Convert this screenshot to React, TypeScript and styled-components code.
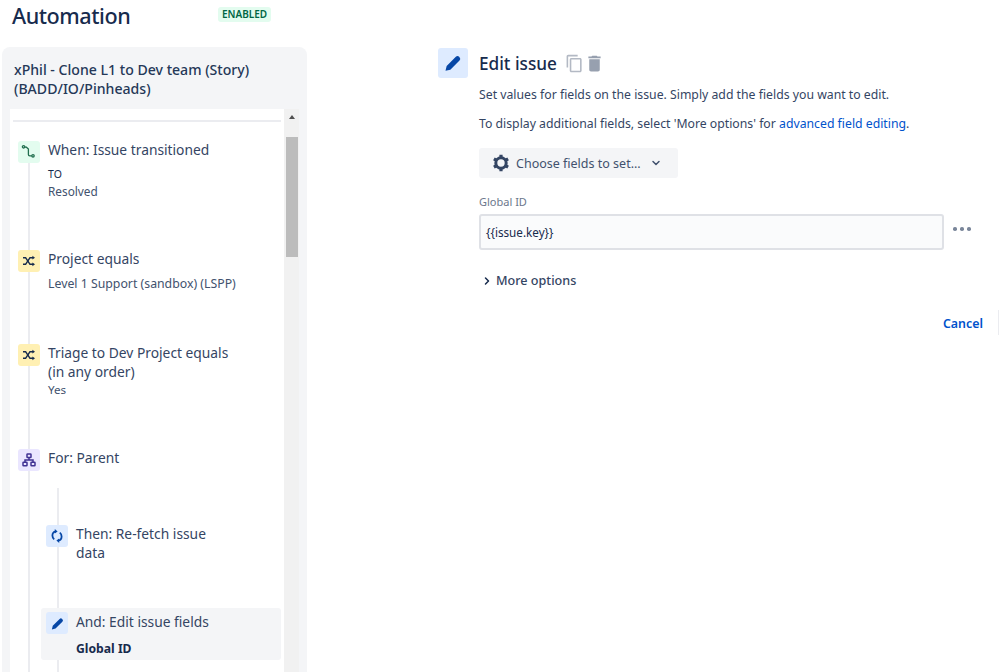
import React from 'react';
import styled, { createGlobalStyle } from 'styled-components';
import { MdContentCopy, MdDelete } from 'react-icons/md';
import { ChevronDown, ChevronRight } from 'lucide-react';

const Global = createGlobalStyle`
  html, body { margin: 0; padding: 0; background: #fff; }
  body { width: 999px; height: 672px; overflow: hidden; font-family: "Noto Sans", "Open Sans", sans-serif; color: #172b4d; }
  * { box-sizing: border-box; }
`;

const Page = styled.div`
  display: flex;
  width: 999px;
  height: 672px;
  overflow: hidden;
`;

const LeftColumn = styled.div`
  display: flex;
  flex-direction: column;
  width: 305px;
  margin-left: 2px;
  flex: none;
`;

const PageHeader = styled.div`
  display: flex;
  align-items: flex-start;
  height: 47px;
  padding-left: 10px;
`;

const PageTitle = styled.h1`
  margin: 0;
  font-size: 21.6px;
  font-weight: 500;
  letter-spacing: -0.45px;
  line-height: 32px;
  width: 206px;
  color: #172b4d;
`;

const Badge = styled.span`
  margin-top: 7px;
  padding: 0 4px;
  height: 15px;
  line-height: 15px;
  font-size: 10px;
  font-weight: 600;
  color: #006644;
  background: #e3fcef;
  border-radius: 3px;
`;

const Panel = styled.section`
  flex: 1;
  min-height: 0;
  display: flex;
  flex-direction: column;
  background: #f4f5f7;
  border-radius: 8px 8px 0 0;
  padding: 13px 9px 0 8px;
`;

const RuleName = styled.h2`
  margin: 0 0 11px 4px;
  font-size: 14.1px;
  font-weight: 500;
  line-height: 19px;
  height: 38px;
  white-space: nowrap;
  color: #253858;
`;

const ScrollFrame = styled.div`
  flex: 1;
  min-height: 0;
  display: flex;
`;

const Canvas = styled.div`
  position: relative;
  width: 274px;
  background: #fff;
  padding: 11px 3px 0;
  flex: none;
`;

const Divider = styled.div`
  height: 2px;
  margin-bottom: 19px;
  background: #ebecf0;
`;

const Rail = styled.div<{ $x: number; $top: number }>`
  position: absolute;
  left: ${p => p.$x}px;
  top: ${p => p.$top}px;
  bottom: 0;
  width: 2px;
  background: #ebecf0;
`;

const Scrollbar = styled.div`
  position: relative;
  width: 15px;
  background: #f1f1f1;
  flex: none;
`;

const ScrollArrow = styled.div`
  position: absolute;
  top: 6px;
  left: 5px;
  width: 0;
  height: 0;
  border-left: 3px solid transparent;
  border-right: 3px solid transparent;
  border-bottom: 4px solid #505050;
`;

const ScrollThumb = styled.div`
  position: absolute;
  top: 28px;
  left: 2px;
  width: 12px;
  height: 120px;
  background: #bcbcbc;
`;

const Step = styled.div<{ $top: number; $indent?: number; $selected?: boolean }>`
  position: relative;
  display: flex;
  gap: 8px;
  margin-top: ${p => p.$top}px;
  margin-left: ${p => p.$indent ?? 5}px;
  ${p => p.$selected && `
    margin-left: 28px;
    padding: 4px 5px;
    height: 52px;
    background: #f4f5f7;
    border-radius: 3px;
  `}
`;

const IconTile = styled.div<{ $bg: string; $color: string }>`
  width: 22px;
  height: 22px;
  flex: none;
  display: flex;
  align-items: center;
  justify-content: center;
  border-radius: 3px;
  background: ${p => p.$bg};
  color: ${p => p.$color};
`;

const StepBody = styled.div<{ $width?: number; $flush?: boolean }>`
  display: flex;
  flex-direction: column;
  margin-top: ${p => (p.$flush ? 0 : -1)}px;
  width: ${p => p.$width ?? 215}px;
`;

const StepTitle = styled.div`
  font-size: 13.8px;
  line-height: 19px;
  color: #344563;
`;

const StepSub = styled.div<{ $top: number; $size: number; $dark?: boolean }>`
  margin-top: ${p => p.$top}px;
  font-size: ${p => p.$size}px;
  line-height: 16px;
  white-space: nowrap;
  color: ${p => (p.$dark ? '#172b4d' : '#42526e')};
`;

const StepBold = styled.div`
  margin-top: 10px;
  font-size: 12.2px;
  font-weight: 700;
  line-height: 16px;
  color: #172b4d;
`;

const RightColumn = styled.main`
  margin-left: 131px;
  margin-top: 48px;
  display: flex;
  gap: 11px;
  width: 546px;
  flex: none;
`;

const EdgeStub = styled.div`
  margin: 310px 0 0 14px;
  width: 1px;
  height: 25px;
  background: #ebecf0;
  flex: none;
`;

const HeroTile = styled.div`
  width: 30px;
  height: 30px;
  flex: none;
  display: flex;
  align-items: center;
  justify-content: center;
  background: #deebff;
  border-radius: 3px;
  color: #0747a6;
`;

const Editor = styled.div`
  flex: 1;
  display: flex;
  flex-direction: column;
`;

const EditorHead = styled.div`
  display: flex;
  align-items: center;
  height: 30px;
`;

const EditorTitle = styled.h2`
  margin: 0 8px 0 0;
  font-size: 17.2px;
  font-weight: 500;
  white-space: nowrap;
  color: #172b4d;
`;

const GreyIcon = styled.span<{ $color: string }>`
  display: inline-flex;
  color: ${p => p.$color};
`;

const Help = styled.p<{ $top: number }>`
  margin: ${p => p.$top}px 0 0;
  font-size: 12.25px;
  line-height: 16px;
  white-space: nowrap;
  color: #344563;
`;

const Link = styled.a`
  color: #0052cc;
  text-decoration: none;
`;

const PickerButton = styled.button`
  margin-top: 16px;
  align-self: flex-start;
  width: 199px;
  height: 30px;
  border: 0;
  border-radius: 3px;
  background: #f4f5f7;
  display: flex;
  align-items: center;
  padding: 0 0 0 13px;
  font: inherit;
  font-size: 12.5px;
  color: #42526e;
`;

const PickerText = styled.span`
  margin: 0 9px 0 6px;
`;

const FieldLabel = styled.label`
  margin-top: 16px;
  font-size: 11px;
  line-height: 16px;
  color: #6b778c;
`;

const FieldRow = styled.div`
  margin-top: 4px;
  display: flex;
  align-items: center;
`;

const FieldInput = styled.div`
  width: 465px;
  height: 36px;
  background: #fafbfc;
  border: 2px solid #dfe1e6;
  border-radius: 3px;
  display: flex;
  align-items: center;
  padding-left: 5px;
  font-size: 11.7px;
  color: #172b4d;
`;

const MoreDots = styled.div`
  margin: -6px 0 0 9px;
  display: flex;
  gap: 3.5px;
`;

const Dot = styled.i`
  width: 3.5px;
  height: 3.5px;
  border-radius: 50%;
  background: #7a869a;
`;

const MoreOptions = styled.div`
  margin-top: 22px;
  display: flex;
  align-items: center;
  gap: 3px;
  padding-left: 2px;
  font-size: 12.6px;
  font-weight: 500;
  line-height: 18px;
  color: #344563;
`;

const Footer = styled.div`
  margin-top: 25px;
  display: flex;
  justify-content: flex-end;
  padding-right: 1px;
`;

const CancelLink = styled.a`
  font-size: 12.4px;
  font-weight: 600;
  line-height: 18px;
  color: #0052cc;
`;

const Route = () => (
  <svg width="16" height="16" viewBox="0 0 16 16" fill="none" stroke="#216e4e" strokeWidth="1.3">
    <circle cx="2.6" cy="2.8" r="1.2" />
    <circle cx="12" cy="11.8" r="1.2" />
    <path d="M3.8 3.2 H5.4 L7.4 5 V10.4 Q7.4 11.8 8.8 11.8 H10.8" />
  </svg>
);

const Crossing = () => (
  <svg width="14" height="14" viewBox="0 0 14 14" fill="none" stroke="#172b4d" strokeWidth="1.5">
    <path d="M1 3.7 H3.6 L8 10.3 H11" />
    <path d="M1 10.3 H3.6 L8 3.7 H11" />
    <path d="M10.4 1.8 L13 3.7 L10.4 5.6 Z M10.4 8.4 L13 10.3 L10.4 12.2 Z" fill="#172b4d" stroke="none" />
  </svg>
);

const Hierarchy = () => (
  <svg width="14" height="14" viewBox="0 0 14 14" fill="none" stroke="#403294" strokeWidth="1.5">
    <rect x="5" y="1" width="4" height="3.6" rx=".6" />
    <rect x="1" y="9.2" width="4" height="3.6" rx=".6" />
    <rect x="9" y="9.2" width="4" height="3.6" rx=".6" />
    <path d="M7 4.6 V7 M3 9.2 V7 H11 V9.2" />
  </svg>
);

const Refetch = () => (
  <svg width="16" height="16" viewBox="0 0 16 16" fill="none" stroke="#0747a6" strokeWidth="1.8">
    <path d="M6.8 3.4 Q3.4 4 3.4 7.6 Q3.4 10 5.2 11.4" />
    <path d="M9.2 12.6 Q12.6 12 12.6 8.4 Q12.6 6 10.8 4.6" />
    <path d="M5.8 1 L8.6 3.4 L5.8 5.6 Z M10.2 10.4 L7.4 12.6 L10.2 15 Z" fill="#0747a6" stroke="none" />
  </svg>
);

const Pencil = ({ size }: { size: number }) => (
  <svg width={size} height={size} viewBox="0 0 24 24" fill="currentColor">
    <path d="M3 21.4 L4.4 15.6 L15.4 4.6 Q17.4 2.6 19.4 4.6 L19.8 5 Q21.8 7 19.8 9 L8.8 20 Z" />
  </svg>
);

const Gear = () => (
  <svg width="18" height="18" viewBox="0 0 18 18" fill="none" stroke="#344563" strokeWidth="3">
    <circle cx="9" cy="9" r="5.2" />
    <path strokeWidth="3.2" d="M9 .8 V3 M9 15 V17.2 M1.9 4.9 L3.9 6 M14.1 12 L16.1 13.1 M1.9 13.1 L3.9 12 M14.1 6 L16.1 4.9" />
  </svg>
);

export default function App() {
  return (
    <Page>
      <Global />
      <LeftColumn>
        <PageHeader>
          <PageTitle>Automation</PageTitle>
          <Badge>ENABLED</Badge>
        </PageHeader>
        <Panel>
          <RuleName>xPhil - Clone L1 to Dev team (Story)<br />(BADD/IO/Pinheads)</RuleName>
          <ScrollFrame>
            <Canvas>
              <Rail $x={18} $top={53} />
              <Rail $x={47} $top={379} />
              <Divider />
              <Step $top={0}>
                <IconTile $bg="#e3fcef" $color="#006644"><Route /></IconTile>
                <StepBody>
                  <StepTitle>When: Issue transitioned</StepTitle>
                  <StepSub $top={7} $size={10.5} $dark>TO</StepSub>
                  <StepSub $top={1} $size={11.8}>Resolved</StepSub>
                </StepBody>
              </Step>
              <Step $top={51}>
                <IconTile $bg="#fff0b3" $color="#172b4d"><Crossing /></IconTile>
                <StepBody>
                  <StepTitle>Project equals</StepTitle>
                  <StepSub $top={8} $size={12.3}>Level 1 Support (sandbox) (LSPP)</StepSub>
                </StepBody>
              </Step>
              <Step $top={52}>
                <IconTile $bg="#fff0b3" $color="#172b4d"><Crossing /></IconTile>
                <StepBody>
                  <StepTitle>Triage to Dev Project equals<br />(in any order)</StepTitle>
                  <StepSub $top={1} $size={11.6}>Yes</StepSub>
                </StepBody>
              </Step>
              <Step $top={51}>
                <IconTile $bg="#eae6ff" $color="#403294"><Hierarchy /></IconTile>
                <StepBody>
                  <StepTitle>For: Parent</StepTitle>
                </StepBody>
              </Step>
              <Step $top={54} $indent={33}>
                <IconTile $bg="#deebff" $color="#0747a6"><Refetch /></IconTile>
                <StepBody $width={150}>
                  <StepTitle>Then: Re-fetch issue<br />data</StepTitle>
                </StepBody>
              </Step>
              <Step $top={46} $selected>
                <IconTile $bg="#deebff" $color="#0747a6"><Pencil size={15} /></IconTile>
                <StepBody $flush>
                  <StepTitle>And: Edit issue fields</StepTitle>
                  <StepBold>Global ID</StepBold>
                </StepBody>
              </Step>
            </Canvas>
            <Scrollbar>
              <ScrollArrow />
              <ScrollThumb />
            </Scrollbar>
          </ScrollFrame>
        </Panel>
      </LeftColumn>
      <RightColumn>
        <HeroTile><Pencil size={20} /></HeroTile>
        <Editor>
          <EditorHead>
            <EditorTitle>Edit issue</EditorTitle>
            <GreyIcon $color="#b3b9c4"><MdContentCopy size={19} /></GreyIcon>
            <GreyIcon $color="#97a0af"><MdDelete size={21} /></GreyIcon>
          </EditorHead>
          <Help $top={9}>Set values for fields on the issue. Simply add the fields you want to edit.</Help>
          <Help $top={13}>To display additional fields, select 'More options' for <Link>advanced field editing</Link>.</Help>
          <PickerButton>
            <Gear />
            <PickerText>Choose fields to set...</PickerText>
            <ChevronDown size={12} strokeWidth={3} />
          </PickerButton>
          <FieldLabel>Global ID</FieldLabel>
          <FieldRow>
            <FieldInput>{'{{issue.key}}'}</FieldInput>
            <MoreDots><Dot /><Dot /><Dot /></MoreDots>
          </FieldRow>
          <MoreOptions>
            <ChevronRight size={12} strokeWidth={3} color="#172b4d" />
            More options
          </MoreOptions>
          <Footer>
            <CancelLink>Cancel</CancelLink>
          </Footer>
        </Editor>
      </RightColumn>
      <EdgeStub />
    </Page>
  );
}
